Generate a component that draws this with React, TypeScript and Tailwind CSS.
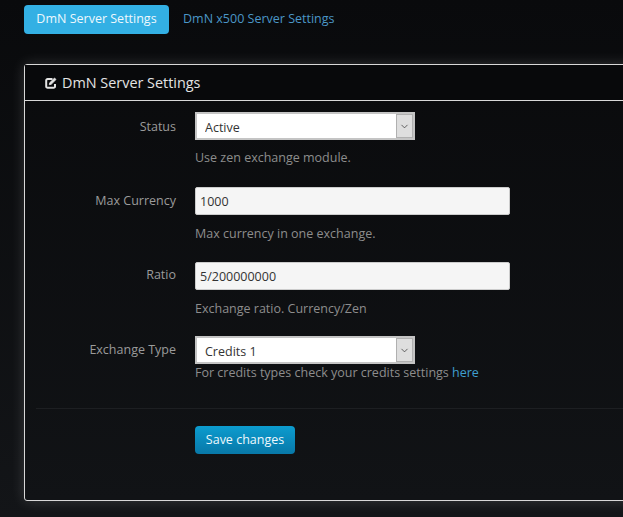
import { ChevronDown } from "lucide-react";

const font = "font-['Open_Sans',sans-serif]";

function EditIcon() {
  return (
    <svg viewBox="0 0 12 12" className="size-[12px]" fill="none" stroke="currentColor" aria-hidden="true">
      <path d="M7.5 2H2.6A1.4 1.4 0 0 0 1.2 3.4v6A1.4 1.4 0 0 0 2.6 10.8h6A1.4 1.4 0 0 0 10 9.4V7" strokeWidth="2" />
      <path d="M4.3 7.7 4.7 5.8 9.5 1 11 2.5 6.2 7.3Z" fill="currentColor" strokeWidth="0.8" />
    </svg>
  );
}

function SelectBox({ value }: { value: string }) {
  return (
    <div className="relative h-[28px] w-[220px] border-2 border-[#c4c4c4] bg-white">
      <select
        defaultValue={value}
        className={`h-full w-full appearance-none bg-transparent pl-[8px] text-[12.5px] leading-[24px] text-[#333] outline-none ${font}`}
      >
        <option>{value}</option>
      </select>
      <span className="pointer-events-none absolute top-0 right-0 bottom-0 flex w-[17px] items-center justify-center border border-[#b0b0b0] bg-[#dedede]">
        <ChevronDown className="size-[11px] text-[#333]" strokeWidth={1.6} aria-hidden="true" />
      </span>
    </div>
  );
}

function TextInput({ value }: { value: string }) {
  return (
    <input
      defaultValue={value}
      className={`block h-[28px] w-[315px] rounded-[2px] border border-[#ccc] bg-[#f5f5f5] px-[4px] text-[12.5px] text-[#333] outline-none ${font}`}
    />
  );
}

function Row({
  label,
  children,
  className,
  labelClass,
}: {
  label: string;
  children: React.ReactNode;
  className?: string;
  labelClass?: string;
}) {
  return (
    <div className={`flex ${className ?? ""}`}>
      <label className={`w-[151px] shrink-0 text-right text-[12.5px] leading-[18px] text-[#9b9b9b] ${labelClass ?? "pt-[5px]"}`}>
        {label}
      </label>
      <div className="ml-[19px]">{children}</div>
    </div>
  );
}

export default function App() {
  return (
    <div className={`h-[517px] w-[623px] overflow-hidden bg-gradient-to-b from-[#090a0c] to-[#131518] ${font}`}>
      <div className="flex items-center gap-[14px] pt-[5px] pl-[24px]">
        <a className="flex h-[29px] w-[145px] items-center justify-center rounded-[4px] bg-[#33b0e4] text-[12.5px] text-[#eef8fd]">
          DmN Server Settings
        </a>
        <a className="text-[12.5px] text-[#4b97c7]">DmN x500 Server Settings</a>
      </div>

      <div className="mt-[30px] ml-[24px] h-[437px] w-[640px] rounded-[3px] border border-[#d8d8d8] bg-gradient-to-b from-[#0a0b0d] to-[#111316] shadow-[0_0_14px_rgba(255,255,255,0.16)]">
        <div className="flex h-[36px] items-center gap-[5px] border-b border-[#d8d8d8] bg-[#08090b] pl-[20px] text-[14.4px] text-[#e4e4e4]">
          <EditIcon />
          DmN Server Settings
        </div>

        <div className="pt-[11px]">
          <Row label="Status" labelClass="pt-[6px]">
            <SelectBox value="Active" />
            <p className="mt-[9px] text-[12.5px] leading-[18px] text-[#8d8d8d]">Use zen exchange module.</p>
          </Row>
          <Row label="Max Currency" className="mt-[20px]">
            <TextInput value="1000" />
            <p className="mt-[10px] text-[12.5px] leading-[18px] text-[#8d8d8d]">Max currency in one exchange.</p>
          </Row>
          <Row label="Ratio" className="mt-[19px]" labelClass="pt-[4px]">
            <TextInput value="5/200000000" />
            <p className="mt-[10px] text-[12.5px] leading-[18px] text-[#8d8d8d]">Exchange ratio. Currency/Zen</p>
          </Row>
          <Row label="Exchange Type" className="mt-[18px]">
            <SelectBox value="Credits 1" />
            <p className="mt-0 text-[12.5px] leading-[18px] text-[#8d8d8d]">
              For credits types check your credits settings{" "}
              <a className="font-medium text-[#3f9fd0]">here</a>
            </p>
          </Row>
        </div>

        <div className="mt-[26px] ml-[11px] border-t border-[#1d1f22] pt-[17px] pl-[159px]">
          <button
            type="button"
            className="h-[28px] w-[100px] rounded-[4px] bg-gradient-to-b from-[#0c9ccf] to-[#0878a8] pt-[1px] text-[12.5px] text-[#eef8fd]"
          >
            Save changes
          </button>
        </div>
      </div>
    </div>
  );
}
